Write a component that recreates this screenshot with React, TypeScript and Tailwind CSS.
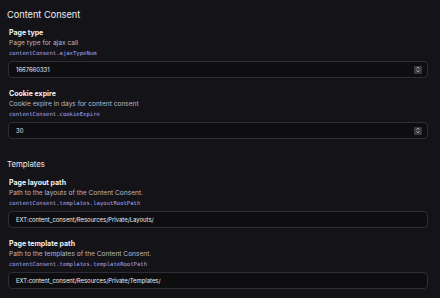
import React from "react";

function Spinner() {
  return (
    <div className="flex h-[8px] w-[8px] items-center justify-center rounded-[1px] bg-[#3b3a42]">
      <svg width="6" height="7" viewBox="0 0 6 7" fill="none">
        <path d="M1.5 2.6 L3 1.2 L4.5 2.6" stroke="#c9c8d0" strokeWidth="0.8" />
        <path d="M1.5 4.4 L3 5.8 L4.5 4.4" stroke="#c9c8d0" strokeWidth="0.8" />
      </svg>
    </div>
  );
}

function Field({
  label,
  desc,
  code,
  value,
  spinner,
  className,
}: {
  label: string;
  desc: string;
  code: string;
  value: string;
  spinner?: boolean;
  className?: string;
}) {
  return (
    <div className={"flex flex-col " + (className ?? "")}>
      <div className="pl-[1px] text-[7px] font-bold leading-[10px] text-[#f2f2f4]">{label}</div>
      <div className="pl-[1px] text-[6.6px] leading-[10px] text-[#b9b8c0]">{desc}</div>
      <div
        className="pl-[1px] text-[5.6px] leading-[10px] text-[#a9a7ea]"
        style={{ fontFamily: '"DejaVu Sans Mono", monospace' }}
      >
        {code}
      </div>
      <div className="mt-[3px] flex h-[17px] items-center justify-between rounded-[4px] border border-[#2f2e36] bg-[#0e0e11] pl-[7px] pr-[5px]">
        <span className="text-[5.9px] leading-none text-[#ededf0]">{value}</span>
        {spinner && <Spinner />}
      </div>
    </div>
  );
}

export default function App() {
  return (
    <div
      className="h-[298px] w-[440px] overflow-hidden bg-[#141318] pl-[8px] pr-[12px] pt-[5px]"
      style={{ fontFamily: 'Inter, "Noto Sans", sans-serif' }}
    >
      <div className="-ml-[1px] text-[9.2px] leading-[20px] text-[#ececef]">Content Consent</div>
      <Field
        className="mt-[3px]"
        label="Page type"
        desc="Page type for ajax call"
        code="contentConsent.ajaxTypeNum"
        value="1667660331"
        spinner
      />
      <Field
        className="mt-[11px]"
        label="Cookie expire"
        desc="Cookie expire in days for content consent"
        code="contentConsent.cookieExpire"
        value="30"
        spinner
      />
      <div className="mt-[15px] -ml-[1px] text-[7.8px] leading-[20px] text-[#ececef]">Templates</div>
      <Field
        className="mt-[4px]"
        label="Page layout path"
        desc="Path to the layouts of the Content Consent."
        code="contentConsent.templates.layoutRootPath"
        value="EXT:content_consent/Resources/Private/Layouts/"
      />
      <Field
        className="mt-[11px]"
        label="Page template path"
        desc="Path to the templates of the Content Consent."
        code="contentConsent.templates.templateRootPath"
        value="EXT:content_consent/Resources/Private/Templates/"
      />
    </div>
  );
}
